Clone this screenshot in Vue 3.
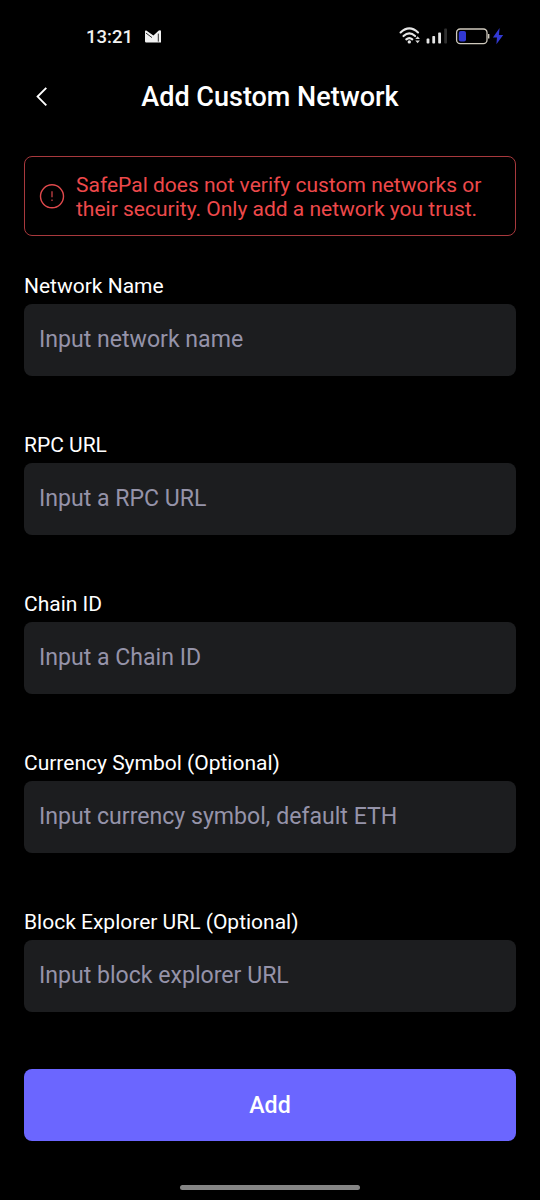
<script setup>
const fields = [
  { label: 'Network Name', hint: 'Input network name' },
  { label: 'RPC URL', hint: 'Input a RPC URL' },
  { label: 'Chain ID', hint: 'Input a Chain ID' },
  { label: 'Currency Symbol (Optional)', hint: 'Input currency symbol, default ETH' },
  { label: 'Block Explorer URL (Optional)', hint: 'Input block explorer URL' },
]
</script>

<template>
  <div class="screen">
    <div class="status">
      <span class="time">13:21</span>
      <svg class="mail" width="16" height="13" viewBox="0 0 16 13">
        <path d="M0 1.4Q0 .2 1.3 .5L8.4 5.6 13.8 .6Q16 -.4 16 1.6V12.4H1.2Q0 12.4 0 11.2Z" fill="#f2f2f2" />
        <path d="M.9 3L7 7.6M13.3 3.6V11.6" fill="none" stroke="#000" stroke-width=".8" />
      </svg>
      <svg class="signals" width="106" height="22" viewBox="0 -.6 106 22">
        <g fill="none" stroke="#e6e6e6" stroke-width="2.1" stroke-linecap="round">
          <path d="M1.6 6.9Q10.3-1.3 19 6.9" />
          <path d="M4.5 10.5Q10.3 5 16.1 10.5" />
          <path d="M7.3 13.8Q10.3 11.1 13.3 13.8" />
        </g>
        <circle cx="10.3" cy="16.3" r="1.7" fill="#e6e6e6" />
        <path d="M16.3 13.3L18.6 10.6 20.9 13.3ZM16.3 15L18.6 17.7 20.9 15Z" fill="#d8d8d8" />
        <g fill="#e6e6e6">
          <rect x="27.6" y="13" width="2.8" height="5" rx=".8" />
          <rect x="33.3" y="10.3" width="2.8" height="7.7" rx=".8" />
          <rect x="39.2" y="7" width="2.8" height="11" rx=".8" />
        </g>
        <rect x="45.2" y="3" width="2.8" height="15" rx=".8" fill="#303030" />
        <rect x="57.6" y="3.4" width="30.4" height="14.6" rx="3.6" fill="none" stroke="#cfc9bd" stroke-width="1.3" />
        <rect x="59.8" y="5.4" width="7.2" height="10.6" rx="2" fill="#3138d2" />
        <path d="M89.7 8.5V13" stroke="#cfc9bd" stroke-width="1.4" />
        <path d="M100.6 2.5L93.9 12H98L97.4 18.6 104.2 9.4H99.9Z" fill="#3138d2" />
      </svg>
    </div>

    <header class="header">
      <svg class="back" width="14" height="22" viewBox="0 0 14 22">
        <path d="M11.3 1.8L2.6 10.6 11.3 19.4" fill="none" stroke="#fff" stroke-width="1.9" />
      </svg>
      <h1>Add Custom Network</h1>
    </header>

    <main>
      <div class="alert">
        <svg width="26" height="26" viewBox="0 0 26 26">
          <circle cx="13" cy="13.3" r="11.5" fill="none" stroke="#e0494c" stroke-width="1.4" />
          <path d="M13 8.3V14.3M13 16.5V18" stroke="#b93d40" stroke-width="1.4" />
        </svg>
        <p>SafePal does not verify custom networks or<br />their security. Only add a network you trust.</p>
      </div>

      <section v-for="f in fields" :key="f.label" class="field">
        <div class="label">{{ f.label }}</div>
        <div class="box">{{ f.hint }}</div>
      </section>

      <button class="add">Add</button>
    </main>
    <div class="home"></div>
  </div>
</template>

<style>
html, body { background: #000; }
</style>

<style scoped>
.screen {
  width: 540px;
  height: 1200px;
  box-sizing: border-box;
  overflow: hidden;
  background: #000;
  color: #fff;
  font-family: Roboto, "Liberation Sans", sans-serif;
  white-space: nowrap;
}
.status {
  height: 72px;
  display: flex;
  align-items: center;
  padding: 0 35px 0 86px;
}
.time {
  width: 59px;
  margin-top: 1px;
  font-size: 18.5px;
  font-weight: 500;
  color: #f2f2f2;
}
.signals { margin-left: auto; }
.header {
  height: 50px;
  display: grid;
  grid-template-columns: 78px 1fr 78px;
  align-items: center;
}
.back { margin-left: 35px; }
h1 {
  margin: 0;
  text-align: center;
  font-size: 27px;
  line-height: 32px;
  font-weight: 500;
}
main { padding: 34px 24px 0; }
.alert {
  height: 80px;
  box-sizing: border-box;
  display: flex;
  align-items: center;
  gap: 11px;
  padding-left: 14px;
  border: 1px solid #a8393d;
  border-radius: 8px;
}
.alert p {
  margin: 1px 0 0;
  font-size: 21px;
  line-height: 24px;
  color: #ee494b;
}
.field { height: 159px; }
.alert + .field { margin-top: 37px; }
.label {
  height: 31px;
  font-size: 21px;
  line-height: 26px;
}
.box {
  height: 72px;
  padding: 0 15px;
  border-radius: 8px;
  background: #1c1d1f;
  color: #9593a9;
  font-size: 23.1px;
  line-height: 71px;
}
.add {
  display: block;
  width: 100%;
  height: 72px;
  margin-top: 1px;
  padding: 0;
  border: 0;
  border-radius: 8px;
  background: #6b66ff;
  color: #fff;
  font: 500 23.2px/72px Roboto, "Liberation Sans", sans-serif;
}
.home {
  width: 180px;
  height: 4.5px;
  margin: 44px auto 0;
  border-radius: 3px;
  background: #858585;
}
</style>
